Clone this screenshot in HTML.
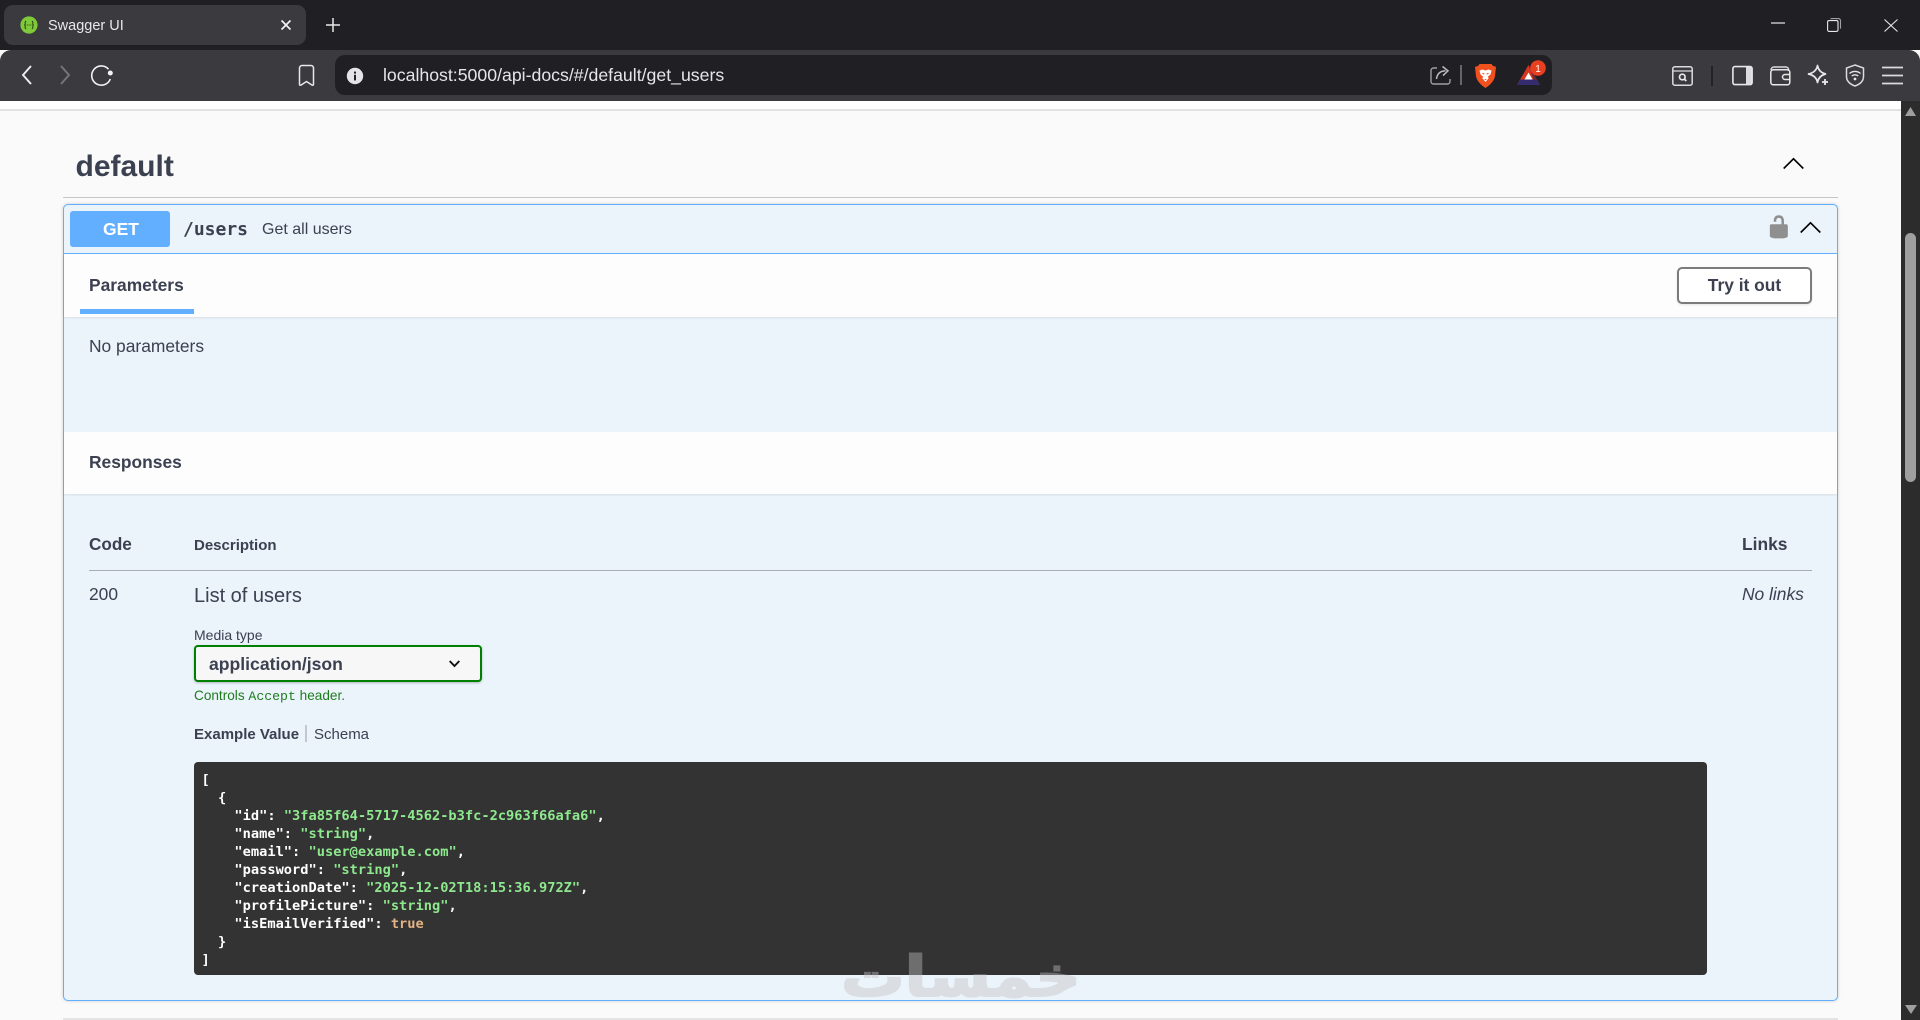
<!DOCTYPE html>
<html><head><meta charset="utf-8"><title>Swagger UI</title>
<style>
html,body{margin:0;padding:0;width:1920px;height:1020px;overflow:hidden;background:#fafafa;font-family:"Liberation Sans",Arial,sans-serif;color:#3b4151}
.a{position:absolute;white-space:nowrap;line-height:20px}
.b{position:absolute}
.s17{font-size:17.4px}.s15{font-size:15px}.s20{font-size:20px}
.bold{font-weight:bold}
svg{position:absolute;overflow:visible}
pre{margin:0;position:absolute;left:201.500px;top:771px;font:bold 13.680px/18px "DejaVu Sans Mono","Liberation Mono",monospace;color:#fff}
.g{color:#8ee88e}.t{color:#e3b283}
</style></head><body>
<!-- browser chrome -->
<div class="b" style="left:0;top:0;width:1920px;height:50px;background:#1f1f24"></div>
<div class="b" style="left:4px;top:5px;width:302px;height:40px;background:#3a3a3f;border-radius:9px"></div>
<svg style="left:20px;top:16px" width="18" height="18" viewBox="0 0 18 18"><circle cx="9" cy="9" r="8.600" fill="#7fc93a"/><path d="M6.200 5.200c-1.400 0-1 1.600-1 2.600 0 .7-.5 1.200-1 1.200.5 0 1 .5 1 1.200 0 1-.4 2.600 1 2.600M11.800 5.200c1.400 0 1 1.600 1 2.600 0 .7.500 1.200 1 1.200-.5 0-1 .5-1 1.200 0 1 .4 2.600-1 2.600" fill="none" stroke="#23400f" stroke-width="1"/><path d="M6.800 9h.9M8.600 9h.9M10.400 9h.9" stroke="#23400f" stroke-width="1.100"/></svg>
<div class="a" style="left:48px;top:16px;font-size:14.500px;color:#e8e8ea">Swagger UI</div>
<svg style="left:281px;top:20px" width="10" height="10"><path d="M.5.5l9 9M9.500 .5l-9 9" stroke="#f2f2f2" stroke-width="1.700"/></svg>
<svg style="left:326px;top:18px" width="14" height="14"><path d="M7 0v14M0 7h14" stroke="#e8e8e8" stroke-width="1.500"/></svg>
<svg style="left:1771px;top:22px" width="14" height="2"><path d="M0 1h14" stroke="#e8e8e8" stroke-width="1.200"/></svg>
<svg style="left:1827px;top:18px" width="14" height="14" viewBox="0 0 14 14"><rect x=".6" y="2.600" width="10.400" height="10.800" rx="1.500" fill="none" stroke="#e8e8e8" stroke-width="1.100"/><path d="M3.500 .6h8a2 2 0 0 1 2 2v8" fill="none" stroke="#a0a0a0" stroke-width="1.100"/></svg>
<svg style="left:1884px;top:19px" width="14" height="13"><path d="M.5.5l13 12M13.500 .5l-13 12" stroke="#e8e8e8" stroke-width="1.100"/></svg>

<div class="b" style="left:0;top:50px;width:1920px;height:51px;background:#3a3a3f;border-radius:11px 11px 0 0"></div>
<svg style="left:20px;top:64px" width="14" height="22"><path d="M11 2L3 11l8 9" fill="none" stroke="#f0f0f0" stroke-width="1.900"/></svg>
<svg style="left:58px;top:64px" width="14" height="22"><path d="M3 2l8 9-8 9" fill="none" stroke="#77777b" stroke-width="1.900"/></svg>
<svg style="left:90px;top:63px" width="24" height="24" viewBox="0 0 24 24"><path d="M18.500 6.200A9.600 9.600 0 1 0 20.300 16" fill="none" stroke="#f0f0f0" stroke-width="1.600"/><circle cx="20.300" cy="10" r="2.500" fill="#f4f4f4"/></svg>
<svg style="left:298px;top:64px" width="17" height="23" viewBox="0 0 17 23"><path d="M1.500 4a2.500 2.500 0 0 1 2.500-2.500h9A2.500 2.500 0 0 1 15.500 4v16.200c0 1-.9 1.300-1.600.8l-5.400-3.500-5.400 3.500c-.7.500-1.600.2-1.600-.8z" fill="none" stroke="#e8e8e8" stroke-width="1.500"/></svg>

<div class="b" style="left:335px;top:55px;width:1217px;height:40px;background:#1f1f24;border-radius:10px"></div>
<svg style="left:346px;top:67px" width="18" height="18"><circle cx="9" cy="9" r="8.200" fill="#e4e4e6"/><rect x="8" y="7.800" width="2" height="5.600" fill="#1f1f24"/><rect x="8" y="4.600" width="2" height="2" fill="#1f1f24"/></svg>
<div class="a" style="left:383px;top:65px;font-size:17.700px;color:#e6e6e8">localhost:5000/api-docs/#/default/get_users</div>

<svg style="left:1430px;top:65px" width="21" height="21" viewBox="0 0 21 21"><path d="M7 3H3.500A2.500 2.500 0 0 0 1 5.500v11A2.500 2.500 0 0 0 3.500 19h14a2.500 2.500 0 0 0 2.500-2.500V14" fill="none" stroke="#a0a0a3" stroke-width="1.400"/><path d="M6.500 14c.5-5 3.500-8 9-8.300M12.500 1.500l5.500 4.300-5 4.800" fill="none" stroke="#bcbcbf" stroke-width="1.500"/></svg>
<div class="b" style="left:1460px;top:65px;width:1.500px;height:20px;background:#66666a"></div>
<svg style="left:1475px;top:64px" width="21" height="24" viewBox="0 0 21 24"><path d="M4.500 0h12l1.500 2 3 .8-1 9.200c-.8 5-5 9-9.500 12C6 21 1.800 17 1 12L0 2.800 3 2z" fill="#f1501f"/><path d="M4.500 6.500l3-1 3 1 3-1 3 1-1 4-2.500 2 .5 2-3 3.500-3-3.500.5-2-2.500-2z" fill="#fff"/><path d="M7.500 9.300l1.800.7M13.500 9.300l-1.800.7" stroke="#f1501f" stroke-width="1.200"/><path d="M9.200 15h2.600l-1.300 1.300z" fill="#f1501f"/></svg>
<svg style="left:1517px;top:65px" width="23" height="20" viewBox="0 0 23 20"><path d="M11.500 0L23 20H0z" fill="#d8341f"/><path d="M11.500 0L23 20h-4.500z" fill="#6e2c33"/><path d="M0 20l3.500-5.500h16L23 20z" fill="#352c70"/><path d="M11.500 7.500l4 7h-8z" fill="#fff"/></svg>
<svg style="left:1530px;top:60px" width="16" height="16"><circle cx="8" cy="8" r="7.800" fill="#e8401f"/><text x="8" y="12" font-family="Liberation Sans" font-size="10" fill="#fff" text-anchor="middle">1</text></svg>

<svg style="left:1672px;top:65px" width="21" height="21" viewBox="0 0 21 21"><rect x=".8" y="1.800" width="19.400" height="18.400" rx="2" fill="none" stroke="#dcdcdf" stroke-width="1.500"/><path d="M1 6h19" stroke="#dcdcdf" stroke-width="1.300"/><circle cx="10.300" cy="12" r="2.800" fill="none" stroke="#e8e8e8" stroke-width="1.700"/><path d="M12.300 14l2 2" stroke="#e8e8e8" stroke-width="1.800"/></svg>
<div class="b" style="left:1711px;top:66px;width:2px;height:20px;background:#232327"></div>
<svg style="left:1732px;top:65px" width="21" height="21" viewBox="0 0 21 21"><path d="M14 1.500h4.500a2 2 0 0 1 2 2v14a2 2 0 0 1-2 2H14z" fill="#dcdcdf"/><rect x=".9" y="1.600" width="19.200" height="18" rx="2" fill="none" stroke="#e8e8e8" stroke-width="1.600"/></svg>
<svg style="left:1770px;top:65px" width="21" height="21" viewBox="0 0 21 21"><path d="M1 5a3 3 0 0 1 3-3h12a2.500 2.500 0 0 1 2.500 2.500V6" fill="none" stroke="#dcdcdf" stroke-width="1.400"/><rect x=".8" y="4.800" width="19" height="15" rx="2.500" fill="none" stroke="#e8e8e8" stroke-width="1.500"/><path d="M20 9.500h-5a2.500 2.500 0 0 0 0 5h5" fill="none" stroke="#e8e8e8" stroke-width="1.500"/></svg>
<svg style="left:1807px;top:64px" width="22" height="23" viewBox="0 0 22 23"><path d="M10.500 1.500c.8 4.500 3.500 7.300 8 8.500-4.500 1.200-7.200 4-8 8.500-.8-4.500-3.500-7.300-9-8.500 5.500-1.200 8.200-4 9-8.500z" fill="none" stroke="#e8e8e8" stroke-width="1.700" stroke-linejoin="round"/><path d="M18 15v6M15 18h6" stroke="#e8e8e8" stroke-width="1.800"/></svg>
<svg style="left:1845px;top:64px" width="20" height="23" viewBox="0 0 20 23"><path d="M10 1l8.500 3v8.500c0 4.500-3.500 7.700-8.500 9.500-5-1.800-8.500-5-8.500-9.500V4z" fill="none" stroke="#dcdcdf" stroke-width="1.500"/><path d="M4.500 9.500c3.200-2.700 7.800-2.700 11 0M6.700 12c2-1.500 4.600-1.500 6.600 0" fill="none" stroke="#e8e8e8" stroke-width="1.400"/><circle cx="10" cy="15" r="1.400" fill="#e8e8e8"/></svg>
<svg style="left:1882px;top:66px" width="21" height="19"><path d="M0 1.500h21M0 9.500h21M0 17.500h21" stroke="#dcdcdf" stroke-width="1.700"/></svg>

<!-- page -->
<div class="b" style="left:0;top:101px;width:1901px;height:8px;background:#fff"></div>
<div class="b" style="left:0;top:109px;width:1901px;height:2px;background:#e2e2e2"></div>

<!-- scrollbar -->
<div class="b" style="left:1901px;top:101px;width:19px;height:919px;background:#2c2c2c"></div>
<div class="b" style="left:1905px;top:233px;width:11px;height:249px;background:#9f9f9f;border-radius:6px"></div>
<svg style="left:1905px;top:107px" width="11" height="9"><path d="M5.500 0L11 9H0z" fill="#9f9f9f"/></svg>
<svg style="left:1905px;top:1005px" width="12" height="9"><path d="M0 0h12L6 9z" fill="#9f9f9f"/></svg>

<div class="a bold" style="left:75.500px;top:157px;font-size:30px">default</div>
<svg style="left:1783px;top:158px" width="21" height="11"><path d="M.7 10.500L10.500 .8l9.800 9.700" fill="none" stroke="#000" stroke-width="1.600"/></svg>
<div class="b" style="left:63px;top:197px;width:1775px;height:1px;background:#c6c6c6"></div>

<!-- opblock -->
<div class="b" style="left:63px;top:204px;width:1773px;height:795px;border:1px solid #61affe;border-radius:5px;background:#ebf3fb;box-shadow:0 0 3px rgba(0,0,0,.19)"></div>
<div class="b" style="left:64px;top:253px;width:1773px;height:1px;background:#61affe"></div>
<div class="b" style="left:70px;top:211px;width:100px;height:36px;background:#61affe;border-radius:3px"></div>
<div class="a bold" style="left:71px;top:218.500px;width:100px;text-align:center;color:#fff;font-size:17.500px">GET</div>
<div class="a bold" style="left:183px;top:219.500px;font:bold 18px/20px 'DejaVu Sans Mono','Liberation Mono',monospace;color:#3b4151">/users</div>
<div class="a" style="left:262px;top:220px;font-size:16px">Get all users</div>
<svg style="left:1766px;top:214px" width="25.700" height="25.700" viewBox="0 0 20 20"><path d="M15.800 8H14V5.600C14 2.703 12.665 1 10 1 7.334 1 6 2.703 6 5.600V6h2v-.801C8 3.754 8.797 3 10 3c1.203 0 2 .754 2 2.199V8H4c-.553 0-1 .646-1 1.199V17c0 .549.428 1.139.951 1.307l1.197.387C5.672 18.861 6.550 19 7.100 19h5.800c.549 0 1.428-.139 1.951-.307l1.196-.387c.524-.167.953-.757.953-1.306V9.199C17 8.646 16.352 8 15.800 8z" fill="#8f8f8f"/></svg>
<svg style="left:1800px;top:222px" width="21" height="11"><path d="M.7 10.500L10.500 .8l9.800 9.700" fill="none" stroke="#000" stroke-width="1.600"/></svg>

<div class="b" style="left:64px;top:254px;width:1773px;height:63px;background:#fff;opacity:.9;box-shadow:0 1px 2px rgba(0,0,0,.1)"></div>
<div class="a bold s17" style="left:89px;top:275px">Parameters</div>
<div class="b" style="left:80px;top:309px;width:114px;height:5px;background:#61affe"></div>
<div class="b" style="left:1677px;top:267px;width:131px;height:33px;border:2px solid #7c7c7c;border-radius:5px;box-shadow:0 1px 2px rgba(0,0,0,.1);background:#fff"></div>
<div class="a bold s17" style="left:1677px;top:275px;width:135px;text-align:center">Try it out</div>
<div class="a s17" style="left:89px;top:335.500px">No parameters</div>

<div class="b" style="left:64px;top:432px;width:1773px;height:62px;background:#fff;opacity:.9;box-shadow:0 1px 2px rgba(0,0,0,.1)"></div>
<div class="a bold s17" style="left:89px;top:452px">Responses</div>
<div class="a bold" style="left:89px;top:534px;font-size:17.140px">Code</div>
<div class="a bold s15" style="left:194px;top:536px">Description</div>
<div class="a bold s17" style="left:1742px;top:534px">Links</div>
<div class="b" style="left:89px;top:570px;width:1723px;height:1px;background:#a9adb8"></div>
<div class="a s17" style="left:89px;top:584px">200</div>
<div class="a s20" style="left:194px;top:586px">List of users</div>
<div class="a s17" style="left:1742px;top:584px;font-style:italic">No links</div>
<div class="a" style="left:194px;top:625px;font-size:14px">Media type</div>
<div class="b" style="left:194px;top:645px;width:284px;height:33px;border:2px solid #008000;border-radius:4px;background:#f7f7f7;box-shadow:0 1px 2px rgba(0,0,0,.25)"></div>
<div class="a bold" style="left:209px;top:654px;font-size:17.600px">application/json</div>
<svg style="left:449px;top:660px" width="11" height="8"><path d="M.7 1l4.800 5 4.800-5" fill="none" stroke="#111" stroke-width="1.900"/></svg>
<div class="a" style="left:194px;top:686px;font-size:13.600px;color:#1f7d1f">Controls <span style="font-family:'Liberation Mono',monospace;font-size:13.200px">Accept</span> header.</div>
<div class="a bold" style="left:194px;top:725px;font-size:15px">Example Value</div>
<div class="b" style="left:305px;top:725px;width:2px;height:17px;background:#c2c8d2"></div>
<div class="a" style="left:314px;top:725px;font-size:15px">Schema</div>

<div class="b" style="left:194px;top:762px;width:1513px;height:213px;background:#333;border-radius:4px"></div>
<pre>[
  {
    "id": <span class="g">"3fa85f64-5717-4562-b3fc-2c963f66afa6"</span>,
    "name": <span class="g">"string"</span>,
    "email": <span class="g">"user@example.com"</span>,
    "password": <span class="g">"string"</span>,
    "creationDate": <span class="g">"2025-12-02T18:15:36.972Z"</span>,
    "profilePicture": <span class="g">"string"</span>,
    "isEmailVerified": <span class="t">true</span>
  }
]</pre>

<div class="b" style="left:63px;top:1018px;width:1775px;height:2px;background:#e4e4e4"></div>

<!-- watermark -->
<div class="a" style="left:845px;top:943px;width:232px;height:70px;text-align:center;font:bold 56px/70px 'DejaVu Sans',sans-serif;color:#c2c2c2;opacity:.41;-webkit-text-stroke:2px #c2c2c2;transform:scaleX(1.130)" dir="rtl">خمسات</div>
</body></html>
